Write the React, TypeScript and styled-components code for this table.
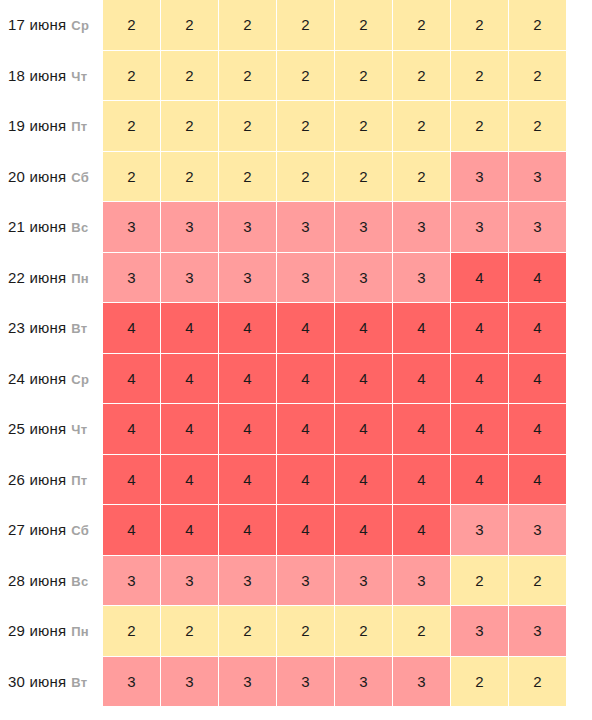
import styled, { createGlobalStyle } from 'styled-components';

type Level = 2 | 3 | 4;

const rows: { date: string; day: string; values: Level[] }[] = [
  { date: '17 июня', day: 'Ср', values: [2, 2, 2, 2, 2, 2, 2, 2] },
  { date: '18 июня', day: 'Чт', values: [2, 2, 2, 2, 2, 2, 2, 2] },
  { date: '19 июня', day: 'Пт', values: [2, 2, 2, 2, 2, 2, 2, 2] },
  { date: '20 июня', day: 'Сб', values: [2, 2, 2, 2, 2, 2, 3, 3] },
  { date: '21 июня', day: 'Вс', values: [3, 3, 3, 3, 3, 3, 3, 3] },
  { date: '22 июня', day: 'Пн', values: [3, 3, 3, 3, 3, 3, 4, 4] },
  { date: '23 июня', day: 'Вт', values: [4, 4, 4, 4, 4, 4, 4, 4] },
  { date: '24 июня', day: 'Ср', values: [4, 4, 4, 4, 4, 4, 4, 4] },
  { date: '25 июня', day: 'Чт', values: [4, 4, 4, 4, 4, 4, 4, 4] },
  { date: '26 июня', day: 'Пт', values: [4, 4, 4, 4, 4, 4, 4, 4] },
  { date: '27 июня', day: 'Сб', values: [4, 4, 4, 4, 4, 4, 3, 3] },
  { date: '28 июня', day: 'Вс', values: [3, 3, 3, 3, 3, 3, 2, 2] },
  { date: '29 июня', day: 'Пн', values: [2, 2, 2, 2, 2, 2, 3, 3] },
  { date: '30 июня', day: 'Вт', values: [3, 3, 3, 3, 3, 3, 2, 2] },
];

const colors: Record<Level, string> = {
  2: '#ffeaa5',
  3: '#ff9d9d',
  4: '#ff6565',
};

const App = () => {
  return (
    <>
      <GlobalStyle />
      <Grid>
        {rows.map((row) => (
          <Row key={row.date}>
            <DateCell>
              {row.date}
              <Day>{row.day}</Day>
            </DateCell>
            {row.values.map((v, i) => (
              <Cell key={i} $level={v}>
                {v}
              </Cell>
            ))}
          </Row>
        ))}
      </Grid>
    </>
  );
};

export default App;

const GlobalStyle = createGlobalStyle`
  body {
    margin: 0;
    background: #fff;
    font-family: 'Liberation Sans', Arial, sans-serif;
    color: #1a1a1a;
  }
`;

const Grid = styled.div`
  display: flex;
  flex-direction: column;
  gap: 1px;
  width: 566px;
`;

const Row = styled.div`
  display: grid;
  grid-template-columns: 102px repeat(8, 57px);
  column-gap: 1px;
  height: 49.5px;
`;

const DateCell = styled.div`
  display: flex;
  align-items: baseline;
  align-self: center;
  padding-left: 8px;
  font-size: 15px;
  letter-spacing: 0.2px;
  white-space: nowrap;
`;

const Day = styled.span`
  margin-left: 5px;
  font-size: 13px;
  font-weight: bold;
  color: #a3a3a3;
`;

const Cell = styled.div<{ $level: Level }>`
  display: flex;
  align-items: center;
  justify-content: center;
  background: ${(p) => colors[p.$level]};
  font-size: 15px;
`;
